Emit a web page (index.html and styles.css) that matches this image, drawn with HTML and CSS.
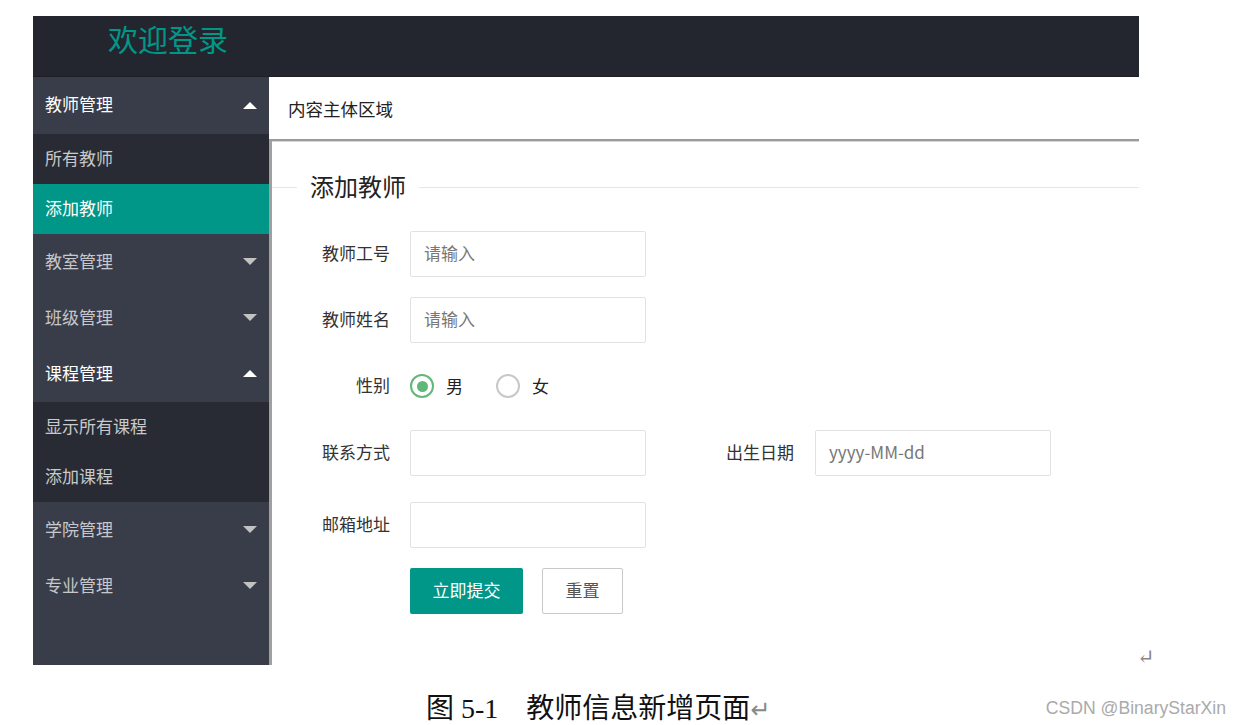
FILE: index.html
```html
<!DOCTYPE html>
<html lang="zh-CN">
<head>
<meta charset="utf-8">
<title>教师信息新增页面</title>
<link rel="stylesheet" href="styles.css">
</head>
<body>
<div class="page">
  <div class="app">
    <div class="header"><div class="logo">欢迎登录</div></div>
    <div class="main">
      <div class="side">
        <div class="nav-head open first">教师管理<span class="arrow up"></span></div>
        <div class="sub">
          <div class="sub-item">所有教师</div>
          <div class="sub-item active">添加教师</div>
        </div>
        <div class="nav-head">教室管理<span class="arrow down"></span></div>
        <div class="nav-head">班级管理<span class="arrow down"></span></div>
        <div class="nav-head open">课程管理<span class="arrow up"></span></div>
        <div class="sub">
          <div class="sub-item">显示所有课程</div>
          <div class="sub-item">添加课程</div>
        </div>
        <div class="nav-head">学院管理<span class="arrow down"></span></div>
        <div class="nav-head">专业管理<span class="arrow down"></span></div>
      </div>
      <div class="content">
        <div class="content-top">内容主体区域</div>
        <div class="content-body">
          <fieldset class="fs">
            <legend class="legend">添加教师</legend>
          </fieldset>
          <div class="form">
            <div class="row">
              <label class="lbl">教师工号</label>
              <div class="input ph">请输入</div>
            </div>
            <div class="row">
              <label class="lbl">教师姓名</label>
              <div class="input ph">请输入</div>
            </div>
            <div class="row row3">
              <label class="lbl">性别</label>
              <div class="radios">
                <span class="radio checked"><span class="dot"></span></span><span class="rtext">男</span>
                <span class="radio"></span><span class="rtext">女</span>
              </div>
            </div>
            <div class="row row4">
              <label class="lbl">联系方式</label>
              <div class="input"></div>
              <label class="lbl lbl2">出生日期</label>
              <div class="input ph">yyyy-MM-dd</div>
            </div>
            <div class="row row5">
              <label class="lbl">邮箱地址</label>
              <div class="input"></div>
            </div>
            <div class="row btns">
              <span class="lbl"></span>
              <button class="btn primary">立即提交</button>
              <button class="btn plain">重置</button>
            </div>
          </div>
        </div>
      </div>
    </div>
  </div>
  <div class="mark-row">↵</div>
  <div class="caption-row">
    <div class="caption">图 5-1　教师信息新增页面<span class="ret">↵</span></div>
    <div class="wm">CSDN @BinaryStarXin</div>
  </div>
</div>
</body>
</html>
```
FILE: styles.css
```css
html, body { margin: 0; padding: 0; background: #fff; }
body { font-family: "Noto Sans CJK SC", "Noto Sans", sans-serif; }
.page { width: 1240px; height: 725px; overflow: hidden; padding-top: 16px; box-sizing: border-box; }
.app { margin-left: 33px; width: 1106px; height: 649px; display: flex; flex-direction: column; }
.header { height: 61px; background: #23262e; display: flex; align-items: center; box-sizing: border-box; border-bottom: 1px solid #1c1e24; }
.logo { margin-left: 75px; color: #009688; font-size: 30px; line-height: 1; margin-top: -16px; }
.main { flex: 1; display: flex; }
.side { width: 236px; background: #393d49; }
.nav-head { height: 56px; box-sizing: border-box; padding-bottom: 4px; display: flex; align-items: center; padding-left: 12px; padding-right: 12px; color: rgba(255,255,255,.72); font-size: 17px; justify-content: space-between; }
.nav-head.first { height: 57px; }
.nav-head.open { color: #fff; }
.sub { background: #282b33; }
.sub-item { height: 50px; box-sizing: border-box; padding-bottom: 3px; display: flex; align-items: center; padding-left: 12px; color: rgba(255,255,255,.75); font-size: 17px; }
.sub-item.active { background: #009688; color: #fff; }
.arrow { width: 0; height: 0; border-left: 7px solid transparent; border-right: 7px solid transparent; margin-top: 3px; }
.arrow.up { border-bottom: 7px solid #fff; }
.arrow.down { border-top: 7px solid #c2c2c2; }
.content { flex: 1; display: flex; flex-direction: column; }
.content-top { height: 64px; display: flex; align-items: center; padding-left: 19px; box-sizing: border-box; font-size: 17.5px; color: #222; border-bottom: 2px solid #9a9a9a; box-shadow: 0 1px 0 #d8d8d8; }
.content-body { flex: 1; border-left: 3px solid #a0a0a0; }
.fs { margin: 34px 0 0 0; padding: 0; border: 0; border-top: 1px solid #e6e6e6; height: 0; }
.legend { margin-left: 25px; padding: 0 13px; font-size: 24px; color: #222; line-height: 1; position: relative; top: -1px; }
.form { padding-top: 32px; }
.row { display: flex; align-items: center; height: 46px; margin-bottom: 20px; }
.lbl { width: 118px; padding-right: 20px; padding-bottom: 3px; text-align: right; font-size: 17px; color: #333; }
.lbl2 { width: 148px; padding-right: 21px; }
.input { width: 236px; height: 46px; box-sizing: border-box; border: 1px solid #e2e2e2; padding-left: 13px; padding-bottom: 3px; display: flex; align-items: center; font-size: 17px; color: #777; border-radius: 2px; }
.radios { display: flex; align-items: center; }
.radio { width: 24px; height: 24px; box-sizing: border-box; border: 2px solid #c8c8c8; border-radius: 50%; display: flex; align-items: center; justify-content: center; }
.radio.checked { border-color: #5fb878; }
.dot { width: 11px; height: 11px; border-radius: 50%; background: #5fb878; }
.rtext { font-size: 17px; color: #222; margin-left: 12px; margin-right: 33px; padding-bottom: 2px; }
.row3 { margin-bottom: 21px; }
.row4 { margin-bottom: 26px; }
.row5 { margin-bottom: 20px; }
.btn { height: 46px; font-family: inherit; font-size: 17px; border-radius: 2px; cursor: pointer; padding: 0 0 3px 0; }
.primary { width: 113px; background: #009688; color: #fff; border: 0; }
.plain { width: 81px; margin-left: 19px; background: #fff; color: #555; border: 1px solid #c9c9c9; }
.mark-row { height: 30px; padding-left: 1137px; font-size: 21px; color: #888; line-height: 1; margin-top: -18px; font-family: "Liberation Serif", "DejaVu Serif", serif; }
.caption-row { display: flex; align-items: center; height: 34px; margin-top: 12px; }
.caption { padding-left: 426px; font-family: "Liberation Serif", "Noto Sans CJK SC", serif; font-size: 28px; color: #111; }
.ret { color: #888; font-size: 24px; font-family: "Liberation Serif", "DejaVu Sans", serif; }
.wm { margin-left: auto; margin-right: 14px; padding-top: 4px; font-family: "Liberation Sans", sans-serif; font-size: 17.6px; color: #aaa; }
```
